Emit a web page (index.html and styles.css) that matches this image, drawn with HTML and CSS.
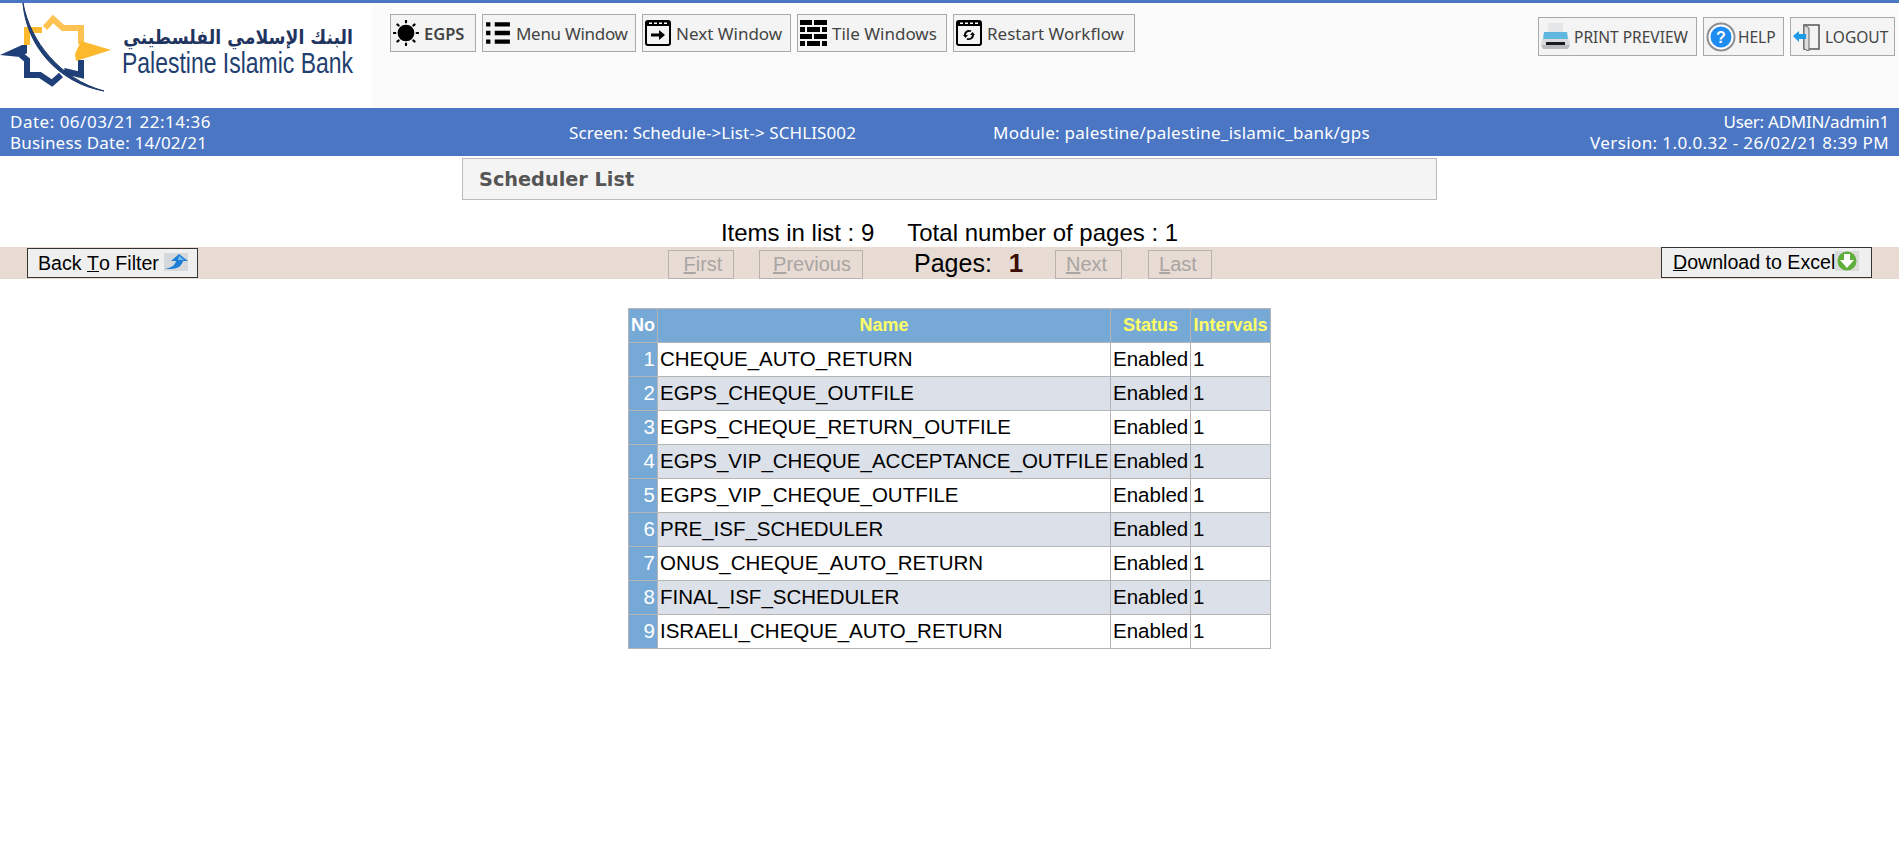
FILE: index.html
```html
<!DOCTYPE html>
<html lang="en">
<head>
<meta charset="utf-8">
<title>Scheduler List</title>
<link rel="stylesheet" href="styles.css">
</head>
<body>
<header class="top">
  <div class="logo">
    <svg class="logo-svg" viewBox="0 0 372 105" width="372" height="105">
      <g fill="none" stroke-width="6" stroke-linejoin="miter">
        <path class="y" d="M24 27 H42"/>
        <path class="y" d="M27 27 V42"/>
        <path class="y2" d="M45 25 L53 16 L63 25 H81 V41"/>
        <path class="n" d="M21 52 L27 57 V72 H40 L52 80 L61 72"/>
        <path class="n" d="M64 68 L81 72 V57"/>
      </g>
      <path class="yf" d="M81 38 L111 47 L76 58 L75 51 Z"/>
      <path class="nf" d="M0 52 L22 42 L27 42 L27 50 L20 54 Z"/>
      <path class="nf" d="M23 0 C30 38 60 76 104 88 C58 80 26 42 23 0 Z" stroke="#1e3a6b" stroke-width="1"/>
      <text class="logo-ar" transform="translate(353 41) scale(.865 1)" x="0" y="0" direction="rtl">البنك الإسلامي الفلسطيني</text>
      <text class="logo-en" x="122" y="70" textLength="231" lengthAdjust="spacingAndGlyphs">Palestine Islamic Bank</text>
    </svg>
  </div>
  <nav class="nav">
    <a class="tb tb-egps"><svg class="ic" viewBox="0 0 28 28"><circle cx="14" cy="14" r="9"/><g stroke="#000" stroke-width="2.400" stroke-linecap="round"><path d="M14 1v1.500M14 25.500v1.500M1 14h1.500M25.500 14h1.500M4.800 4.800l1.200 1.200M22 22l1.200 1.200M4.800 23.200l1.200-1.200M22 6l1.200-1.200"/></g></svg><b class="tb-bold">EGPS</b></a>
    <a class="tb tb-menu"><svg class="ic" viewBox="0 0 24 24"><path d="M1 2h4v4H1zM9 2h14v4H9zM1 10h4v4H1zM9 10h14v4H9zM1 18h4v4H1zM9 18h14v4H9z"/></svg>Menu Window</a>
    <a class="tb tb-next"><svg class="ic" viewBox="0 0 26 26"><path fill-rule="evenodd" d="M3 0h20a3 3 0 0 1 3 3v20a3 3 0 0 1-3 3H3a3 3 0 0 1-3-3V3a3 3 0 0 1 3-3zM2 6v17a1 1 0 0 0 1 1h20a1 1 0 0 0 1-1V6z"/><path fill="#fff" d="M4 2.500h3v1.500H4zM9 2.500h3v1.500H9zM14 2.500h3v1.500h-3zM19 2.500h3v1.500h-3z"/><path d="M6 13.500h8V10l6 5-6 5v-3.500H6z"/></svg>Next Window</a>
    <a class="tb tb-tile"><svg class="ic ic-wide" viewBox="0 0 27 26"><path d="M0 0h12v5H0zM14 0h13v5H14zM0 7h5v5H0zM7 7h13v5H7zM22 7h5v5h-5zM0 14h12v5H0zM14 14h13v5H14zM0 21h5v5H0zM7 21h13v5H7zM22 21h5v5h-5z"/></svg>Tile Windows</a>
    <a class="tb tb-restart"><svg class="ic" viewBox="0 0 26 26"><path fill-rule="evenodd" d="M3 0h20a3 3 0 0 1 3 3v20a3 3 0 0 1-3 3H3a3 3 0 0 1-3-3V3a3 3 0 0 1 3-3zM2 6v17a1 1 0 0 0 1 1h20a1 1 0 0 0 1-1V6z"/><path fill="#fff" d="M4 2.500h3v1.500H4zM9 2.500h3v1.500H9zM14 2.500h3v1.500h-3zM19 2.500h3v1.500h-3z"/><path d="M13 10a5 5 0 0 0-5 5H7l2.500 3 2.500-3h-2a3.200 3.200 0 0 1 4.500-2.900l1-1.500A5 5 0 0 0 13 10zM13 20a5 5 0 0 0 5-5h1l-2.500-3-2.500 3h2a3.200 3.200 0 0 1-4.500 2.900l-1 1.500A5 5 0 0 0 13 20z"/></svg>Restart Workflow</a>
  </nav>
  <nav class="nav-right">
    <a class="tb tb-r tb-print"><svg class="ic ic-print" viewBox="0 0 30 28"><path fill="#e4e6e8" d="M7 0h15v10H7z"/><path fill="#5fb6de" d="M3 9h23l1 7H2z"/><path fill="#d8dadb" d="M1 16h27l1 6H0z"/><path fill="#1b1b1b" d="M5 19h19v3H5z"/><path fill="#b9bcbe" d="M0 22h29l-2 4H2z"/></svg>PRINT PREVIEW</a>
    <a class="tb tb-r tb-help"><svg class="ic ic-help" viewBox="0 0 30 30"><circle cx="15" cy="15" r="13.500" fill="#fff" stroke="#8b8f93" stroke-width="2"/><circle cx="15" cy="15" r="10.500" fill="#1e8cf0"/><text class="help-q" x="15" y="20.500" text-anchor="middle">?</text></svg>HELP</a>
    <a class="tb tb-r tb-logout"><svg class="ic ic-logout" viewBox="0 0 28 28"><path fill="#f3f3f3" stroke="#555" stroke-width="1.500" d="M11 2h15v24H11z"/><path fill="#ddd" stroke="#666" d="M11 2l5 3v23l-5-2z"/><path fill="#1e9be8" d="M0 13l6-5v3h7v5H6v3z"/></svg>LOGOUT</a>
  </nav>
</header>

<section class="infobar">
  <div class="info-left"><span class="ls-date">Date: 06/03/21 22:14:36</span><br><span class="ls-bdate">Business Date: 14/02/21</span></div>
  <div class="info-screen">Screen: Schedule-&gt;List-&gt; SCHLIS002</div>
  <div class="info-module">Module: palestine/palestine_islamic_bank/gps</div>
  <div class="info-right"><span class="ls-user">User: ADMIN/admin1</span><br><span class="ls-version">Version: 1.0.0.32 - 26/02/21 8:39 PM</span></div>
</section>

<main class="main">
  <h1 class="title">Scheduler List</h1>
  <p class="counts"><span>Items in list : 9</span><span>Total number of pages : 1</span></p>
  <div class="band">
    <button class="btn btn-back">Back <u>T</u>o Filter <svg class="btn-ic" viewBox="0 0 24 18"><rect width="24" height="18" fill="#d5d9dc"/><path fill="#1f7fd6" d="M15 1l9 7h-5c-1 5-6 8-12 8H1c5-1 10-3 11-8H7z"/><path fill="#7cc0f0" d="M15 3l5 4h-6z"/></svg></button>
    <div class="pager">
      <button class="pg pg-first" disabled><u>F</u>irst</button>
      <button class="pg pg-prev" disabled><u>P</u>revious</button>
      <span class="pages">Pages:<b>1</b></span>
      <button class="pg pg-next" disabled><u>N</u>ext</button>
      <button class="pg pg-last" disabled><u>L</u>ast</button>
    </div>
    <button class="btn btn-dl"><u>D</u>ownload to Excel<svg class="btn-ic btn-ic-dl" viewBox="0 0 24 20"><rect width="24" height="20" fill="#d9dcd9"/><circle cx="12" cy="10" r="9.500" fill="#5fae3c"/><path fill="#fff" d="M9 3h6v6h4l-7 8-7-8h4z"/></svg></button>
  </div>
  <table class="list">
    <colgroup><col class="c-no"><col class="c-name"><col class="c-status"><col class="c-int"></colgroup>
    <thead>
      <tr><th class="th-no">No</th><th>Name</th><th>Status</th><th>Intervals</th></tr>
    </thead>
    <tbody>
      <tr><th>1</th><td>CHEQUE_AUTO_RETURN</td><td>Enabled</td><td>1</td></tr>
      <tr><th>2</th><td>EGPS_CHEQUE_OUTFILE</td><td>Enabled</td><td>1</td></tr>
      <tr><th>3</th><td>EGPS_CHEQUE_RETURN_OUTFILE</td><td>Enabled</td><td>1</td></tr>
      <tr><th>4</th><td>EGPS_VIP_CHEQUE_ACCEPTANCE_OUTFILE</td><td>Enabled</td><td>1</td></tr>
      <tr><th>5</th><td>EGPS_VIP_CHEQUE_OUTFILE</td><td>Enabled</td><td>1</td></tr>
      <tr><th>6</th><td>PRE_ISF_SCHEDULER</td><td>Enabled</td><td>1</td></tr>
      <tr><th>7</th><td>ONUS_CHEQUE_AUTO_RETURN</td><td>Enabled</td><td>1</td></tr>
      <tr><th>8</th><td>FINAL_ISF_SCHEDULER</td><td>Enabled</td><td>1</td></tr>
      <tr><th>9</th><td>ISRAELI_CHEQUE_AUTO_RETURN</td><td>Enabled</td><td>1</td></tr>
    </tbody>
  </table>
</main>
</body>
</html>
```

FILE: styles.css
```css
* { box-sizing: border-box; }
html, body { margin: 0; padding: 0; background: #fff; }
body { font-family: "Liberation Sans", Arial, sans-serif; color: #000; height: 855px; overflow: hidden; }

.top { display: flex; height: 108px; border-top: 3px solid #4a76c4; background: #fbfbfb; }
.logo { width: 372px; height: 105px; background: #fff; flex: none; }
.logo-svg { display: block; }
.y { stroke: #fdb92e; }
.y2 { stroke: #fcc353; }
.n { stroke: #1f3f78; }
.yf { fill: #fdb92e; }
.nf { fill: #1f3f78; }
.logo-ar { font-family: "DejaVu Sans", sans-serif; font-size: 20px; font-weight: 700; fill: #1f3560; }
.logo-en { font-family: "Liberation Sans Narrow", "Liberation Sans", sans-serif; font-size: 30px; fill: #22406f; }

.nav { display: flex; gap: 6px; padding: 11px 0 0 18px; align-items: flex-start; }
.nav-right { display: flex; gap: 6px; margin-left: auto; padding: 14px 4px 0 0; align-items: flex-start; }

.tb { display: flex; align-items: center; height: 38px; padding-left: 2px; background: #f4f4f4; border: 1px solid #a9a9a9; font-family: "Noto Sans", sans-serif; font-size: 17px; color: #444; white-space: nowrap; }
.tb-r { height: 39px; font-size: 15.500px; }
.tb-bold { font-weight: 600; font-size: 16.500px; }
.ic { width: 26px; height: 26px; margin-right: 5px; flex: none; }
.ic-wide { width: 27px; }
.ic-print { width: 30px; height: 28px; margin-right: 3px; }
.ic-help { width: 30px; height: 30px; margin-right: 2px; }
.ic-logout { width: 28px; height: 28px; margin-right: 4px; }
.help-q { font-family: "Liberation Sans", sans-serif; font-weight: 700; font-size: 16px; fill: #fff; }
.tb-egps { width: 86px; }
.tb-menu { width: 154px; letter-spacing: -.300px; }
.tb-next { width: 149px; }
.tb-tile { width: 150px; }
.tb-restart { width: 182px; }
.tb-print { width: 159px; }
.tb-help { width: 81px; }
.tb-logout { width: 105px; }

.infobar { display: flex; height: 48px; background: #4a76c4; color: #fff; font-family: "Noto Sans", sans-serif; font-size: 17px; line-height: 21px; padding: 3px 10px 0 10px; }
.info-left { width: 559px; flex: none; }
.info-screen { width: 424px; flex: none; padding-top: 11px; letter-spacing: .100px; }
.info-module { flex: none; padding-top: 11px; letter-spacing: .240px; }
.info-right { margin-left: auto; text-align: right; }
.ls-date { letter-spacing: .500px; }
.ls-bdate { letter-spacing: .200px; }
.ls-user { letter-spacing: -.270px; }
.ls-version { letter-spacing: .400px; }

.main { display: flex; flex-direction: column; align-items: center; }
.title { width: 975px; height: 42px; margin: 2px 0 0; padding: 0 0 0 16px; border: 1px solid #bbb; background: #f4f4f4; font-family: "DejaVu Sans", Verdana, sans-serif; font-size: 19.300px; font-weight: 700; line-height: 42px; color: #555; }
.counts { display: flex; gap: 33px; height: 47px; margin: 0; padding-top: 19px; font-size: 24px; line-height: 28px; white-space: pre; }

.band { display: flex; align-items: flex-start; align-self: stretch; height: 32px; background: #e7dbd4; padding-left: 27px; padding-right: 27px; }
.btn { display: flex; align-items: center; height: 30px; margin: 1px 0 0; padding: 0 0 0 10px; background: #efefef; border: 1px solid #333; border-radius: 0; font-family: "Liberation Sans", sans-serif; font-size: 19.600px; color: #000; white-space: pre; }
.btn-back { width: 171px; flex: none; }
.btn-dl { width: 211px; flex: none; margin-top: 0; height: 31px; margin-left: auto; padding-left: 11px; }
.btn-ic { width: 24px; height: 18px; margin-top: -2px; }
.btn-ic-dl { height: 20px; margin-top: -4px; }
.pager { display: flex; align-items: flex-start; margin-left: 470px; }
.pg { height: 29px; margin: 3px 0 0; padding: 0; background: #e7dbd4; border: 1px solid #b8b2ae; border-radius: 0; font-family: "Liberation Sans", sans-serif; font-size: 20px; color: #a9a5a2; }
.pg-first { width: 66px; margin-right: 25px; padding-left: 4px; }
.pg-prev { width: 104px; margin-right: 52px; padding-left: 2px; }
.pg-next { width: 67px; margin-right: 26px; padding-right: 4px; }
.pg-last { width: 64px; padding-right: 4px; }
.pages { width: 141px; margin-left: -1px; font-size: 25px; line-height: 32px; white-space: pre; }
.pages b { margin-left: 17px; color: #3a0d00; font-size: 26px; }

.list { margin: 29px 0 0; border-collapse: collapse; table-layout: fixed; width: 642px; font-size: 20.500px; }
.c-no { width: 29px; }
.c-name { width: 453px; }
.c-status { width: 80px; }
.c-int { width: 80px; }
.list th, .list td { height: 34px; padding: 0 2px 2px; border: 1px solid #b5b5b5; white-space: nowrap; overflow: hidden; }
.list thead th { background: #76a9d5; color: #ffff66; font-size: 18px; font-weight: 700; text-align: center; padding: 0 1px; }
.list thead .th-no { color: #fff; padding: 0; }
.list tbody th { background: #76a9d5; color: #fff; font-weight: 400; text-align: right; }
.list tbody tr:nth-child(even) td { background: #dce0e9; }
```
